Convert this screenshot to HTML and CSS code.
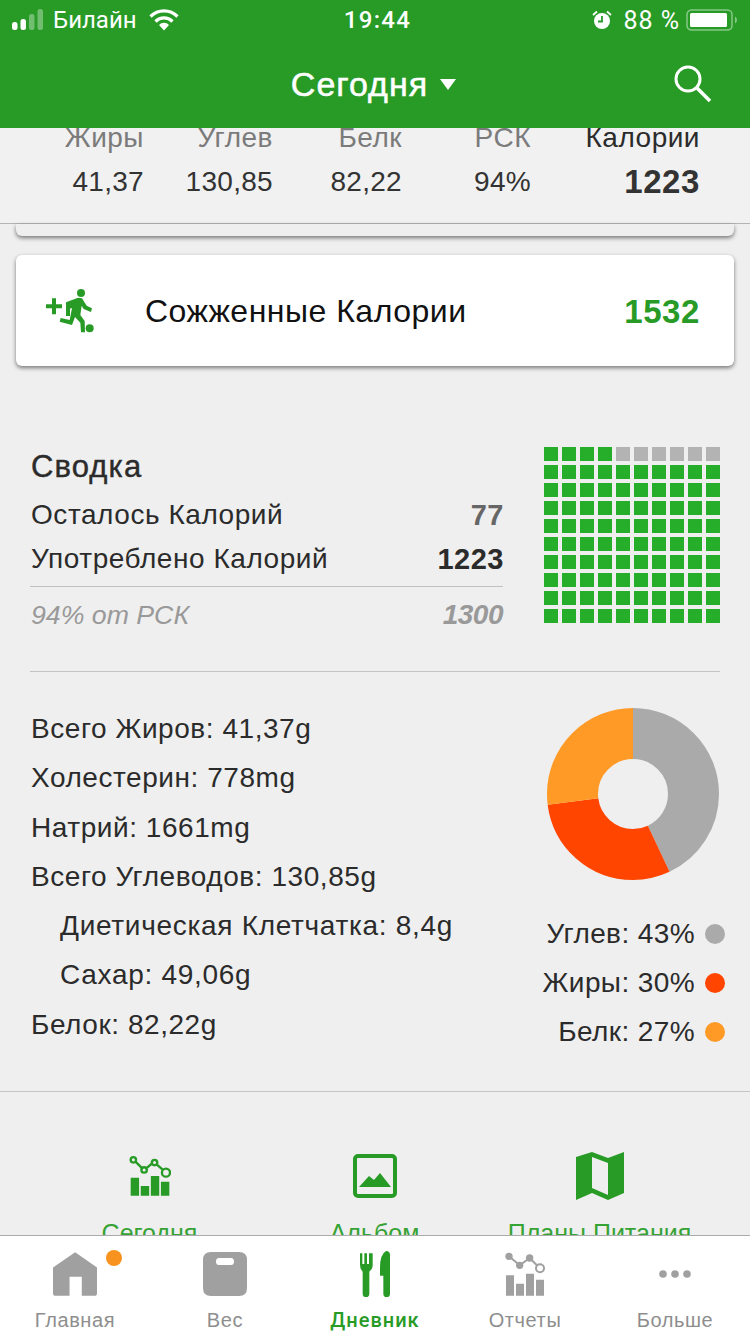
FILE: index.html
```html
<!DOCTYPE html>
<html lang="ru">
<head>
    <meta charset="UTF-8">
    <meta name="viewport" content="width=device-width, initial-scale=1.0">
    <title>Дневник</title>
    <link rel="stylesheet" href="styles.css">
</head>
<body>
    <header class="top">
        <div class="status">
            <div class="status-left">
                <svg class="signal" width="34" height="22" viewBox="0 0 34 22">
                    <rect x="0" y="13" width="5.5" height="8" rx="2.5" fill="#fff"/>
                    <rect x="8.5" y="10" width="5.5" height="11" rx="2.5" fill="#fff"/>
                    <rect x="17" y="5" width="5.5" height="16" rx="2.5" fill="#fff" opacity=".35"/>
                    <rect x="25.5" y="0" width="5.5" height="21" rx="2.5" fill="#fff" opacity=".35"/>
                </svg>
                <span>Билайн</span>
                <svg class="wifi" width="30" height="22" viewBox="0 0 30 22">
                    <path d="M1.5 7.5a19 19 0 0 1 27 0" fill="none" stroke="#fff" stroke-width="3.2"/>
                    <path d="M6.5 12.5a12 12 0 0 1 17 0" fill="none" stroke="#fff" stroke-width="3.2"/>
                    <path d="M10 16a6.5 6.5 0 0 1 10 0l-5 5.500z" fill="#fff"/>
                </svg>
            </div>
            <div class="status-time">19:44</div>
            <div class="status-right">
                <svg width="20" height="20" viewBox="0 0 20 20">
                    <circle cx="10" cy="11" r="8" fill="#fff"/>
                    <path d="M10 6v5.500H6" fill="none" stroke="#279b26" stroke-width="1.800"/>
                    <path d="M1 5l4-3.500M19 5l-4-3.500" stroke="#fff" stroke-width="1.800"/>
                </svg>
                <span class="battery-text">88 %</span>
                <svg width="52" height="22" viewBox="0 0 52 22">
                    <rect x="1" y="1" width="45" height="20" rx="4.500" fill="none" stroke="#fff" stroke-opacity=".45" stroke-width="1.500"/>
                    <rect x="4" y="4" width="37" height="14" rx="1.500" fill="#fff"/>
                    <path d="M49 7.500q2 1 2 3.500t-2 3.500z" fill="#fff" fill-opacity=".45"/>
                </svg>
            </div>
        </div>
        <div class="nav">
            <div></div>
            <div class="nav-title">Сегодня <span class="caret"></span></div>
            <svg class="search" width="40" height="40" viewBox="0 0 40 40">
                <circle cx="15" cy="15" r="12" fill="none" stroke="#fff" stroke-width="3"/>
                <path d="M24 24l13 13" stroke="#fff" stroke-width="3.500"/>
            </svg>
        </div>
    </header>

    <main class="page">
        <div class="totals">
            <div class="total"><div class="total-label">Жиры</div><div class="total-value">41,37</div></div>
            <div class="total"><div class="total-label">Углев</div><div class="total-value">130,85</div></div>
            <div class="total"><div class="total-label">Белк</div><div class="total-value">82,22</div></div>
            <div class="total"><div class="total-label">РСК</div><div class="total-value">94%</div></div>
            <div class="total total-main"><div class="total-label">Калории</div><div class="total-value">1223</div></div>
        </div>

        <div class="stub-card"></div>

        <div class="burn-card">
            <svg class="burn-icon" width="50" height="48" viewBox="135 205 150 138">
                <path d="M138 254h18v-18h12v18h18v12h-18v18h-12v-18h-18z" fill="#279b26"/>
                <circle cx="243" cy="220" r="12" fill="#279b26"/>
                <circle cx="269" cy="326" r="12" fill="#279b26"/>
                <path d="M198 248l36-14 12 2 14 22 16 8-3 11-22-9-6-10-4 28 13 18 1 34h-12l-2-29-16-17-9 24-37-10 3-11 27 6 7-36-6 2v22h-12z" fill="#279b26"/>
            </svg>
            <div class="burn-name">Сожженные Калории</div>
            <div class="burn-value">1532</div>
        </div>

        <section class="overview">
            <div class="overview-text">
                <h2 class="overview-title">Сводка</h2>
                <div class="overview-row"><span>Осталось Калорий</span><b class="muted-num">77</b></div>
                <div class="overview-row"><span>Употреблено Калорий</span><b>1223</b></div>
                <div class="overview-row overview-goal"><span>94% от РСК</span><b>1300</b></div>
            </div>
            <div class="waffle">
                <i class="on"></i><i class="on"></i><i class="on"></i><i class="on"></i><i></i><i></i><i></i><i></i><i></i><i></i>
                <i class="on"></i><i class="on"></i><i class="on"></i><i class="on"></i><i class="on"></i><i class="on"></i><i class="on"></i><i class="on"></i><i class="on"></i><i class="on"></i>
                <i class="on"></i><i class="on"></i><i class="on"></i><i class="on"></i><i class="on"></i><i class="on"></i><i class="on"></i><i class="on"></i><i class="on"></i><i class="on"></i>
                <i class="on"></i><i class="on"></i><i class="on"></i><i class="on"></i><i class="on"></i><i class="on"></i><i class="on"></i><i class="on"></i><i class="on"></i><i class="on"></i>
                <i class="on"></i><i class="on"></i><i class="on"></i><i class="on"></i><i class="on"></i><i class="on"></i><i class="on"></i><i class="on"></i><i class="on"></i><i class="on"></i>
                <i class="on"></i><i class="on"></i><i class="on"></i><i class="on"></i><i class="on"></i><i class="on"></i><i class="on"></i><i class="on"></i><i class="on"></i><i class="on"></i>
                <i class="on"></i><i class="on"></i><i class="on"></i><i class="on"></i><i class="on"></i><i class="on"></i><i class="on"></i><i class="on"></i><i class="on"></i><i class="on"></i>
                <i class="on"></i><i class="on"></i><i class="on"></i><i class="on"></i><i class="on"></i><i class="on"></i><i class="on"></i><i class="on"></i><i class="on"></i><i class="on"></i>
                <i class="on"></i><i class="on"></i><i class="on"></i><i class="on"></i><i class="on"></i><i class="on"></i><i class="on"></i><i class="on"></i><i class="on"></i><i class="on"></i>
                <i class="on"></i><i class="on"></i><i class="on"></i><i class="on"></i><i class="on"></i><i class="on"></i><i class="on"></i><i class="on"></i><i class="on"></i><i class="on"></i>
            </div>
        </section>

        <section class="details">
            <ul class="nutrients">
                <li>Всего Жиров: 41,37g</li>
                <li>Холестерин: 778mg</li>
                <li>Натрий: 1661mg</li>
                <li>Всего Углеводов: 130,85g</li>
                <li class="sub">Диетическая Клетчатка: 8,4g</li>
                <li class="sub">Сахар: 49,06g</li>
                <li>Белок: 82,22g</li>
            </ul>
            <div class="breakdown">
                <svg class="pie" width="174" height="174" viewBox="0 0 174 174">
                    <g fill="none" stroke-width="51" transform="rotate(-90 87 87)">
                        <circle cx="87" cy="87" r="60.500" pathLength="100" stroke="#aaaaaa" stroke-dasharray="43 57"/>
                        <circle cx="87" cy="87" r="60.500" pathLength="100" stroke="#ff4500" stroke-dasharray="30 70" stroke-dashoffset="-43"/>
                        <circle cx="87" cy="87" r="60.500" pathLength="100" stroke="#ff9a26" stroke-dasharray="27 73" stroke-dashoffset="-73"/>
                    </g>
                </svg>
                <div class="legend">
                    <div class="legend-row">Углев: 43%<span class="dot dot-carb"></span></div>
                    <div class="legend-row">Жиры: 30%<span class="dot dot-fat"></span></div>
                    <div class="legend-row">Белк: 27%<span class="dot dot-protein"></span></div>
                </div>
            </div>
        </section>

        <section class="shortcuts">
            <div class="shortcut">
                <svg width="42" height="40" viewBox="115 48 125 120">
                    <path d="M120 113h25v54h-25zM150 138h25v29h-25zM180 108h25v59h-25zM210 125h25v42h-25z" fill="#279b26"/>
                    <path d="M135 66l18 18M168 84l14-12M198 74l18 16" stroke="#279b26" stroke-width="7"/>
                    <g fill="none" stroke="#279b26" stroke-width="7">
                        <circle cx="128" cy="60" r="8"/>
                        <circle cx="160" cy="90" r="8"/>
                        <circle cx="191" cy="68" r="8"/>
                        <circle cx="225" cy="98" r="12"/>
                    </g>
                </svg>
                <div class="shortcut-label">Сегодня</div>
            </div>
            <div class="shortcut">
                <svg width="44" height="44" viewBox="0 0 44 44">
                    <rect x="2" y="2" width="40" height="40" rx="3" fill="none" stroke="#279b26" stroke-width="4"/>
                    <path d="M6 33l10-11 5 4 6-7 11 14z" fill="#279b26"/>
                </svg>
                <div class="shortcut-label">Альбом</div>
            </div>
            <div class="shortcut">
                <svg width="48" height="48" viewBox="0 0 48 48">
                    <path fill-rule="evenodd" d="M0 5L16 0l16 6 16-6v41l-16 7-16-7-16 7zM16 5v31l16 7V11z" fill="#279b26"/>
                </svg>
                <div class="shortcut-label">Планы Питания</div>
            </div>
        </section>
    </main>

    <nav class="tabs">
        <div class="tab">
            <span class="badge"></span>
            <svg width="44" height="44" viewBox="155 54 133 132">
                <path d="M222 54l66 46v78q0 8-8 8h-38v-58h-37v58h-42q-8 0-8-8v-78z" fill="#a0a0a0"/>
            </svg>
            <div class="tab-label">Главная</div>
        </div>
        <div class="tab">
            <svg width="44" height="44" viewBox="0 0 44 44">
                <path fill-rule="evenodd" d="M8 0h28q8 0 8 8v28q0 8-8 8H8q-8 0-8-8V8q0-8 8-8zM16 6q-3 0-3 3.500t3 3.500h12q3 0 3-3.500T28 6z" fill="#a0a0a0"/>
            </svg>
            <div class="tab-label">Вес</div>
        </div>
        <div class="tab tab-active">
            <svg width="30" height="46" viewBox="330 48 90 138">
                <path d="M330 55h7v32h6V55h8v32h6V55h11v35q0 12-9 18l-1 3v65q0 10-10 10t-10-10v-65l-1-3q-7-6-7-18z" fill="#279b26"/>
                <path d="M420 60q0-12-12-12-18 10-18 50v24h10v54q0 10 10 10t10-10z" fill="#279b26"/>
            </svg>
            <div class="tab-label">Дневник</div>
        </div>
        <div class="tab">
            <svg width="42" height="44" viewBox="15 55 126 132">
                <path d="M21 125h24v61H21zM51 150h24v36H51zM81 120h24v66H81zM111 138h24v48h-24z" fill="#a0a0a0"/>
                <path d="M30 68l32 27 30-22 24 24" fill="none" stroke="#a0a0a0" stroke-width="6"/>
                <circle cx="30" cy="68" r="11" fill="#a0a0a0"/>
                <circle cx="62" cy="95" r="11" fill="#a0a0a0"/>
                <circle cx="92" cy="73" r="11" fill="#a0a0a0"/>
                <circle cx="123" cy="104" r="12" fill="#fff" stroke="#a0a0a0" stroke-width="6"/>
            </svg>
            <div class="tab-label">Отчеты</div>
        </div>
        <div class="tab">
            <svg width="44" height="44" viewBox="0 0 44 44">
                <circle cx="10" cy="22" r="3.800" fill="#a0a0a0"/>
                <circle cx="22" cy="22" r="3.800" fill="#a0a0a0"/>
                <circle cx="34" cy="22" r="3.800" fill="#a0a0a0"/>
            </svg>
            <div class="tab-label">Больше</div>
        </div>
    </nav>
</body>
</html>
```

FILE: styles.css
```css
* { box-sizing: border-box; }
html, body { margin: 0; padding: 0; }
body { width: 750px; height: 1334px; overflow: hidden; display: flex; flex-direction: column; background: #efefef; font-family: "Liberation Sans", Arial, sans-serif; color: #2b2b2b; }

.top { height: 128px; flex: none; background: #279b26; color: #fff; }
.status { height: 40px; display: grid; grid-template-columns: 1fr auto 1fr; align-items: center; padding: 0 12px; font-family: Roboto, sans-serif; font-size: 24px; }
.status-left { display: flex; align-items: center; gap: 7px; }
.status-left .wifi { margin-left: 5px; }
.status-time { font-weight: 500; letter-spacing: 1.3px; margin-left: 5px; }
.status-right { display: flex; align-items: center; justify-content: flex-end; gap: 11px; }
.battery-text { font-size: 25px; letter-spacing: 1px; margin-right: -5px; }
.nav { height: 88px; display: grid; grid-template-columns: 1fr auto 1fr; align-items: center; padding: 0 37px; }
.nav-title { font-size: 34px; letter-spacing: 1px; -webkit-text-stroke: .5px #fff; display: flex; align-items: center; gap: 12px; margin-right: 3px; }
.caret { width: 0; height: 0; border-left: 8px solid transparent; border-right: 8px solid transparent; border-top: 11px solid #fff; }
.search { justify-self: end; }

.page { flex: 1; min-height: 0; overflow: hidden; background: #efefef; }

.totals { height: 96px; display: grid; grid-template-columns: repeat(4, 129px) 169px; padding-left: 15px; border-bottom: 1px solid #b4b4b4; background: #f1f1f1; text-align: right; }
.total-label { font-size: 28px; letter-spacing: .5px; line-height: 20px; color: #7b7b7b; height: 30px; }
.total-value { font-size: 28px; letter-spacing: .3px; line-height: 48px; color: #333; }
.total-main .total-label { color: #2b2b2b; }
.total-main .total-value { font-weight: bold; font-size: 33px; letter-spacing: .6px; }

.stub-card { height: 12px; margin: 0 16px; background: #efefef; border-radius: 0 0 6px 6px; box-shadow: 0 2px 4px rgba(0, 0, 0, .5); }

.burn-card { height: 111px; margin: 19px 16px 0; padding: 2px 34px 0 29px; background: #fff; border-radius: 6px; box-shadow: 0 2px 4px rgba(0, 0, 0, .5); display: flex; align-items: center; }
.burn-icon { flex: none; margin-top: -2px; }
.burn-name { margin-left: 50px; font-size: 32px; letter-spacing: .5px; color: #111; flex: 1; }
.burn-value { font-size: 33px; letter-spacing: .6px; font-weight: bold; color: #279b26; }

.overview { height: 306px; margin: 0 30px; padding-top: 81px; border-bottom: 1px solid #c4c4c4; display: flex; justify-content: space-between; }
.overview-text { width: 473px; }
.overview-title { margin: 0 0 6px 1px; font-size: 31px; letter-spacing: 1.1px; -webkit-text-stroke: .4px #2b2b2b; line-height: 40px; font-weight: normal; color: #2b2b2b; }
.overview-row { display: flex; justify-content: space-between; padding-left: 1px; font-size: 28px; letter-spacing: .55px; line-height: 44px; }
.overview-row b { font-size: 29px; letter-spacing: .5px; margin-right: -1px; }
.muted-num { color: #666; }
.overview-goal { margin-top: 5px; border-top: 1px solid #c0c0c0; font-size: 26.700px; letter-spacing: 0; line-height: 56px; color: #999; font-style: italic; }
.overview-goal b { font-size: 28px; letter-spacing: -.5px; margin-right: 0; }
.waffle { width: 176px; height: 176px; display: grid; grid-template-columns: repeat(10, 14px); grid-auto-rows: 14px; gap: 4px; }
.waffle i { background: #b3b3b3; }
.waffle i.on { background: #26ae2a; }

.details { height: 420px; padding: 32px 25px 0 31px; border-bottom: 1px solid #c4c4c4; display: flex; justify-content: space-between; }
.nutrients { list-style: none; margin: 0; padding: 0; font-size: 28px; letter-spacing: .55px; line-height: 49.300px; }
.nutrients .sub { padding-left: 29px; letter-spacing: .7px; }
.breakdown { width: 180px; display: flex; flex-direction: column; align-items: center; }
.pie { display: block; margin: 3px 5px 0 0; }
.legend { margin-top: 28px; align-self: flex-end; font-size: 28px; letter-spacing: .4px; line-height: 49px; }
.legend-row { display: flex; align-items: center; justify-content: flex-end; white-space: nowrap; gap: 10px; }
.dot { width: 20px; height: 20px; border-radius: 50%; }
.dot-carb { background: #aaaaaa; }
.dot-fat { background: #ff4500; }
.dot-protein { background: #ff9a26; }

.shortcuts { display: grid; grid-template-columns: repeat(3, 225px); padding: 60px 37px 0; }
.shortcut { display: flex; flex-direction: column; align-items: center; }
.shortcut svg { height: 48px; }
.shortcut-label { margin-top: 19px; font-size: 25px; line-height: 28px; color: #36a335; white-space: nowrap; }

.tabs { height: 99px; flex: none; display: grid; grid-template-columns: repeat(5, 150px); background: #fff; border-top: 1px solid #ababab; position: relative; }
.tab { position: relative; display: flex; flex-direction: column; align-items: center; padding-top: 15px; }
.tab svg { height: 46px; display: block; }
.tab-label { margin-top: 11px; font-size: 20px; line-height: 24px; letter-spacing: .6px; color: #8e8e8e; }
.tab-active .tab-label { font-family: Roboto, sans-serif; font-size: 20px; letter-spacing: 1px; color: #279b26; font-weight: 500; }
.badge { position: absolute; left: 106px; top: 14px; width: 16px; height: 16px; border-radius: 50%; background: #f7931e; }
```
